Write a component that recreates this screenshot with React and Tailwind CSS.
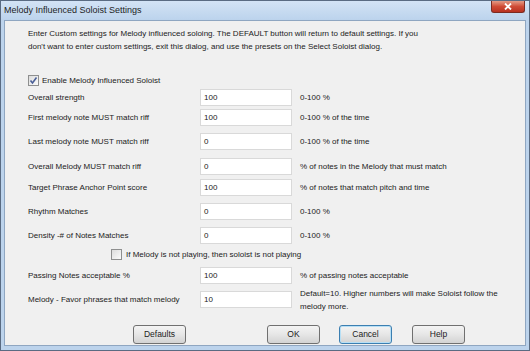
import React from 'react';

const rows = [
  { label: 'Overall strength', value: '100', note: '0-100 %', mt: 'mt-[2px]' },
  { label: 'First melody note MUST match riff', value: '100', note: '0-100 % of the time', mt: 'mt-[3px]' },
  { label: 'Last melody note MUST match riff', value: '0', note: '0-100 % of the time', mt: 'mt-[7px]' },
  { label: 'Overall Melody MUST match riff', value: '0', note: '% of notes in the Melody that must match', mt: 'mt-[8px]' },
  { label: 'Target Phrase Anchor Point score', value: '100', note: '% of notes that match pitch and time', mt: 'mt-[4px]' },
  { label: 'Rhythm Matches', value: '0', note: '0-100 %', mt: 'mt-[7px]' },
  { label: 'Density -# of Notes Matches', value: '0', note: '0-100 %', mt: 'mt-[7px]' },
];

const Checkbox = ({ checked }) => (
  <span className="w-[11px] h-[11px] border border-[#8e8f8f] bg-gradient-to-br from-[#dcdcdc] to-[#fbfbfb] flex items-center justify-center shrink-0">
    {checked && (
      <svg width="9" height="9" viewBox="0 0 9 9">
        <path d="M1.5 4.5 L3.5 7 L7.5 1.5" stroke="#4a5f97" strokeWidth="1.6" fill="none" />
      </svg>
    )}
  </span>
);

const Field = ({ value }) => (
  <div className="w-[92px] h-[17px] bg-white border border-[#d9d9d9] flex items-center pl-[3px] text-[#222]">
    {value}
  </div>
);

const Btn = ({ children, focus, className }) => (
  <button
    className={
      'h-[19px] w-[53px] rounded-[3px] border text-[8.5px] text-[#222] bg-gradient-to-b from-[#f4f4f4] via-[#e6e6e6] to-[#d3d3d3] ' +
      (focus ? 'border-[#3c7fb1] shadow-[inset_0_0_0_1px_#b7dff5]' : 'border-[#707070]') +
      ' ' + className
    }
  >
    {children}
  </button>
);

export default function App() {
  return (
    <div className="w-[530px] h-[351px] bg-[#bcd3ec] border border-[#5a6b82] flex flex-col overflow-hidden" style={{ fontFamily: '"Liberation Sans", Arial, sans-serif' }}>
      <div className="h-[18px] shrink-0 bg-gradient-to-b from-[#d3e3f5] to-[#bdd4ed] flex items-start justify-between pl-[3px] pr-[4px]">
        <span className="text-[9px] text-[#1e1e1e] mt-[3px]">Melody Influenced Soloist Settings</span>
        <div className="w-[34px] h-[12px] rounded-b-[3px] border border-t-0 border-[#7b2b22] bg-gradient-to-b from-[#e39a86] via-[#cf4b36] to-[#b83222] flex items-center justify-center">
          <svg width="8" height="7" viewBox="0 0 8 7">
            <path d="M1 0.5 L7 6.5 M7 0.5 L1 6.5" stroke="white" strokeWidth="1.8" />
          </svg>
        </div>
      </div>
      <div className="flex-1 mx-[3px] mb-[4px] mt-[1px] bg-[#f0f0f0] border border-[#8fa6c1] text-[8px] text-[#222] pl-[23px]">
        <p className="mt-[6px] leading-[13px] w-[392px]">
          Enter Custom settings for Melody influenced soloing. The DEFAULT button will return to default settings. If you don't want to enter custom settings, exit this dialog, and use the presets on the Select Soloist dialog.
        </p>
        <label className="flex items-center gap-[3px] mt-[21px] h-[13px]">
          <Checkbox checked />
          <span>Enable Melody Influenced Soloist</span>
        </label>
        {rows.map((r) => (
          <div key={r.label} className={'flex items-center h-[17px] ' + r.mt}>
            <span className="w-[172px]">{r.label}</span>
            <Field value={r.value} />
            <span className="ml-[8px]">{r.note}</span>
          </div>
        ))}
        <label className="flex items-center gap-[4px] mt-[4px] h-[13px] pl-[83px]">
          <Checkbox />
          <span>If Melody is not playing, then soloist is not playing</span>
        </label>
        <div className="flex items-center h-[17px] mt-[6px]">
          <span className="w-[172px]">Passing Notes acceptable %</span>
          <Field value="100" />
          <span className="ml-[8px]">% of passing notes acceptable</span>
        </div>
        <div className="flex items-center h-[17px] mt-[7px]">
          <span className="w-[172px]">Melody - Favor phrases that match melody</span>
          <Field value="10" />
          <span className="ml-[8px] w-[200px] leading-[13px]">Default=10. Higher numbers will make Soloist follow the melody more.</span>
        </div>
        <div className="flex mt-[17px]">
          <Btn className="ml-[105px]">Defaults</Btn>
          <Btn className="ml-[81px]">OK</Btn>
          <Btn focus className="ml-[19px]">Cancel</Btn>
          <Btn className="ml-[20px]">Help</Btn>
        </div>
      </div>
    </div>
  );
}
